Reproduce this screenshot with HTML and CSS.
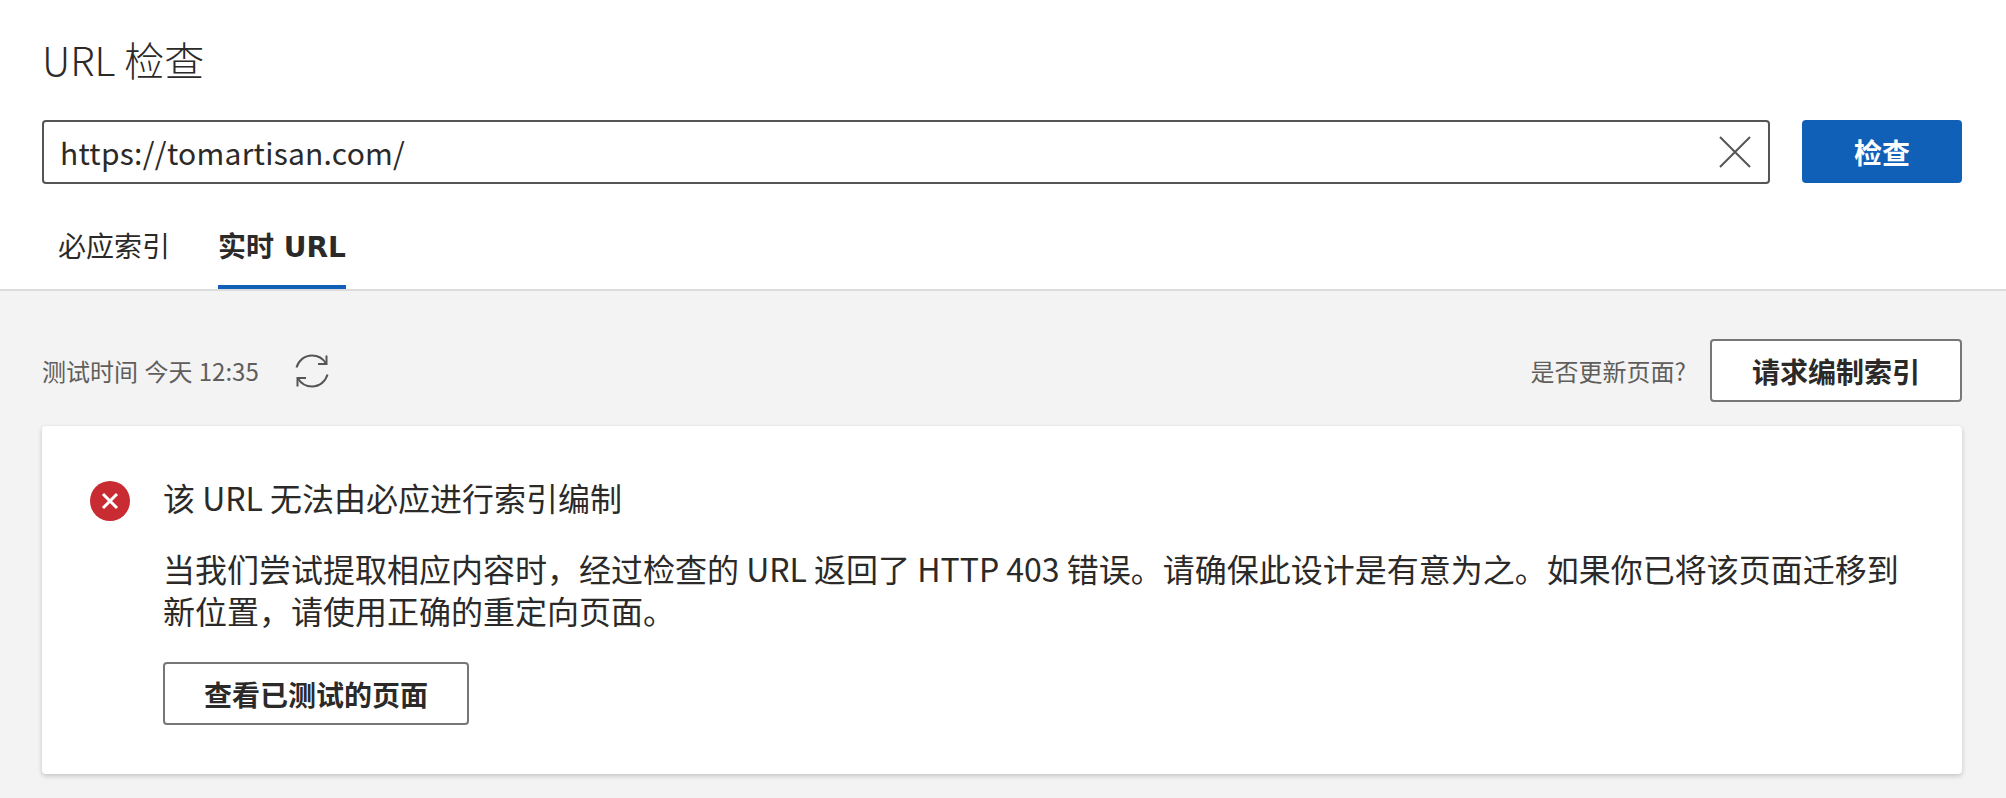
FILE: index.html
```html
<!DOCTYPE html>
<html lang="zh-CN">
<head>
    <meta charset="UTF-8">
    <title>URL 检查</title>
    <link rel="stylesheet" href="styles.css">
</head>
<body>
    <div class="top">
        <h1 class="title">URL 检查</h1>
        <div class="search-row">
            <div class="search-box">
                <span class="search-text">https://tomartisan.com/</span>
                <svg class="clear-icon" width="32" height="32" viewBox="0 0 32 32">
                    <path d="M1 1L31 31M31 1L1 31" fill="none" stroke="#555" stroke-width="2"/>
                </svg>
            </div>
            <div class="btn btn-primary">检查</div>
        </div>
        <div class="tabs">
            <div class="tab">必应索引</div>
            <div class="tab tab-active">实时<span class="tab-latin"> URL</span></div>
        </div>
    </div>

    <div class="content">
        <div class="status-row">
            <div class="status-left">
                <span class="muted muted-time">测试时间 今天 12:35</span>
                <svg class="refresh-icon" width="36" height="36" viewBox="0 0 36 36">
                    <path d="M2.5 14.5C4.5 7.5 10.5 2.5 18 2.5C24 2.5 29 5.5 32 10.5M33.5 21.5C31.5 28.5 25.5 33.5 18 33.5C12 33.5 7 30.5 4 25.5" fill="none" stroke="#555" stroke-width="2"/>
                    <path d="M32.5 2.5V11H24M3.5 33.5V25H12" fill="none" stroke="#555" stroke-width="2"/>
                </svg>
            </div>
            <div class="status-right">
                <span class="muted">是否更新页面?</span>
                <div class="btn btn-outline btn-index">请求编制索引</div>
            </div>
        </div>

        <div class="card">
            <svg class="error-icon" width="40" height="40" viewBox="0 0 40 40">
                <circle cx="20" cy="20" r="20" fill="#c82b32"/>
                <path d="M13 13L27 27M27 13L13 27" fill="none" stroke="#fff" stroke-width="3"/>
            </svg>
            <div class="card-body">
                <div class="card-title">该 URL 无法由必应进行索引编制</div>
                <p class="card-text">当我们尝试提取相应内容时，经过检查的 URL 返回了 HTTP 403 错误。请确保此设计是有意为之。如果你已将该页面迁移到新位置，请使用正确的重定向页面。</p>
                <div class="btn btn-outline btn-view">查看已测试的页面</div>
            </div>
        </div>
    </div>
</body>
</html>
```

FILE: styles.css
```css
body {
    margin: 0;
    background-color: #f3f3f3;
    color: #2b2a29;
    font-family: "Noto Sans CJK SC", sans-serif;
}

.top {
    background-color: #fff;
    border-bottom: 2px solid #dcdcdc;
    padding: 33px 44px 0 42px;
}

.title {
    margin: 0;
    font-size: 40px;
    line-height: 52px;
    font-weight: 300;
}

.search-row {
    display: flex;
    gap: 32px;
    margin-top: 35px;
}

.search-box {
    flex: 1;
    height: 64px;
    box-sizing: border-box;
    border: 2px solid #555;
    border-radius: 4px;
    display: flex;
    align-items: center;
    justify-content: space-between;
    padding: 0 17px 0 16px;
}

.search-text {
    font-size: 30px;
    letter-spacing: 0.25px;
}

.btn {
    box-sizing: border-box;
    height: 63px;
    border-radius: 4px;
    display: flex;
    align-items: center;
    justify-content: center;
    font-size: 28px;
    font-weight: 700;
}

.btn-primary {
    width: 160px;
    background-color: #1160b7;
    color: #fff;
}

.btn-outline {
    background-color: #fff;
    border: 2px solid #777;
}

.btn-index {
    width: 252px;
}

.btn-view {
    width: 306px;
}

.tabs {
    display: flex;
    gap: 48px;
    margin-top: 41px;
    padding-left: 16px;
}

.tab {
    font-size: 28px;
    line-height: 40px;
    height: 64px;
    box-sizing: border-box;
}

.tab-active {
    font-weight: 700;
    border-bottom: 4px solid #1160b7;
}

.tab-latin {
    font-family: "DejaVu Sans", sans-serif;
    font-size: 28px;
}

.content {
    padding: 48px 44px 24px 42px;
}

.status-row {
    display: flex;
    align-items: center;
    justify-content: space-between;
}

.status-left,
.status-right {
    display: flex;
    align-items: center;
}

.muted {
    font-size: 24px;
    color: #605e5c;
}

.muted-time {
    word-spacing: 1px;
}

.refresh-icon {
    margin-left: 35px;
}

.status-right .muted {
    margin-right: 24px;
}

.card {
    margin-top: 24px;
    background-color: #fff;
    border-radius: 4px;
    box-shadow: 0 2px 5px rgba(0, 0, 0, 0.2);
    padding: 51px 42px 49px 48px;
    display: flex;
    gap: 33px;
}

.error-icon {
    margin-top: 4px;
    flex-shrink: 0;
}

.card-body {
    flex: 1;
}

.card-title {
    font-size: 32px;
    line-height: 40px;
}

.card-text {
    margin: 30px 0 31px;
    font-size: 32px;
    line-height: 42px;
}
```
